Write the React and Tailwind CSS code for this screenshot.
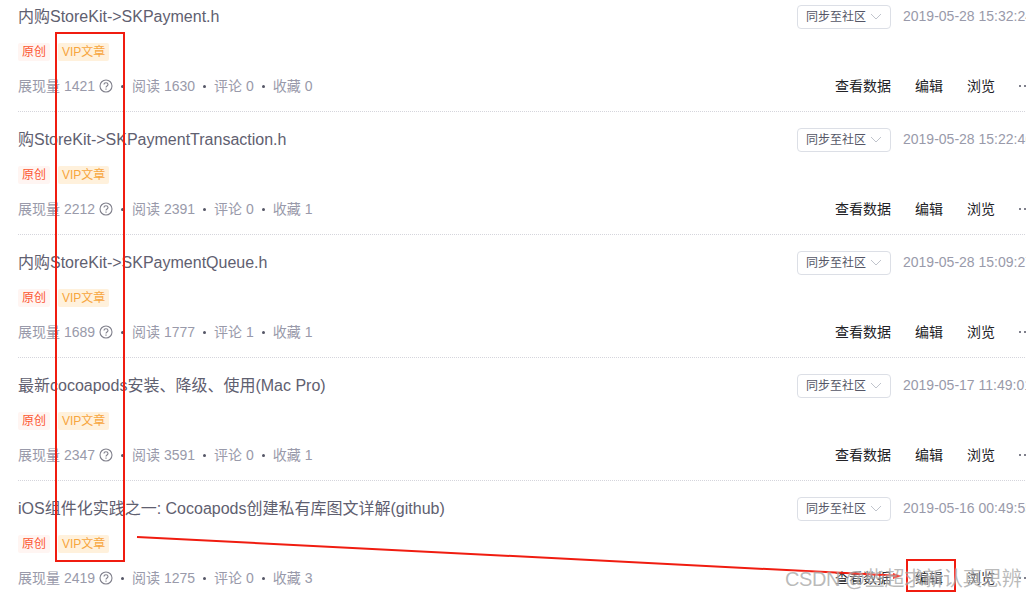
import React from 'react';

const rows = [
  { title: '内购StoreKit->SKPayment.h', views: 1421, reads: 1630, comments: 0, saves: 0, date: '2019-05-28 15:32:24' },
  { title: '购StoreKit->SKPaymentTransaction.h', views: 2212, reads: 2391, comments: 0, saves: 1, date: '2019-05-28 15:22:46' },
  { title: '内购StoreKit->SKPaymentQueue.h', views: 1689, reads: 1777, comments: 1, saves: 1, date: '2019-05-28 15:09:27' },
  { title: '最新cocoapods安装、降级、使用(Mac Pro)', views: 2347, reads: 3591, comments: 0, saves: 1, date: '2019-05-17 11:49:01' },
  { title: 'iOS组件化实践之一: Cocoapods创建私有库图文详解(github)', views: 2419, reads: 1275, comments: 0, saves: 3, date: '2019-05-16 00:49:55' },
];

const Dot = () => <span className="mx-[8px] h-[3px] w-[3px] rounded-full bg-[#555666]"></span>;

const Row = ({ row }) => (
  <div className="h-[123px] border-b border-dotted border-[#d5d5dc] pt-[16px] box-border">
    <div className="flex h-[23px] items-center">
      <div className="flex-1 text-[16px] text-[#5f6070] whitespace-nowrap">{row.title}</div>
      <div className="ml-auto flex w-[248px] shrink-0 items-center whitespace-nowrap">
        <div className="flex h-[24px] w-[94px] items-center rounded-[4px] border border-[#dcdfe6] pl-[8px] text-[12px] text-[#555666]">
          同步至社区
          <svg className="ml-[4px]" width="12" height="7" viewBox="0 0 12 7" fill="none" stroke="#c0c4cc" strokeWidth="1">
            <path d="M1 1l5 5 5-5" />
          </svg>
        </div>
        <span className="ml-[12px] text-[14px] text-[#999aaa]">{row.date}</span>
      </div>
    </div>
    <div className="mt-[15px] flex h-[18px] items-center gap-[8px] text-[12px]">
      <span className="rounded-[2px] bg-[#fff5f2] px-[4px] leading-[18px] text-[#fc5531]">原创</span>
      <span className="rounded-[2px] bg-[#fff1dc] px-[4px] leading-[18px] text-[#f7a63e]">VIP文章</span>
    </div>
    <div className="mt-[15px] flex h-[20px] items-center text-[14px] whitespace-nowrap">
      <div className="flex items-center text-[#999aaa]">
        <span>展现量 {row.views}</span>
        <svg className="ml-[4px]" width="14" height="14" viewBox="0 0 14 14" fill="none" stroke="#80808c" strokeWidth="1.1">
          <circle cx="7" cy="7" r="6" />
          <path d="M5 5.6c0-1.1.9-1.9 2-1.9s2 .8 2 1.8c0 1.4-2 1.5-2 3" />
          <path d="M7 9.6v1.1" />
        </svg>
        <Dot />
        <span>阅读 {row.reads}</span>
        <Dot />
        <span>评论 {row.comments}</span>
        <Dot />
        <span>收藏 {row.saves}</span>
      </div>
      <div className="ml-auto flex w-[210px] shrink-0 items-center text-[#222226]">
        <span>查看数据</span>
        <span className="ml-[24px]">编辑</span>
        <span className="ml-[24px]">浏览</span>
        <span className="ml-[24px] flex gap-[3px]">
          <i className="h-[2px] w-[2px] rounded-full bg-[#555666]"></i>
          <i className="h-[2px] w-[2px] rounded-full bg-[#555666]"></i>
          <i className="h-[2px] w-[2px] rounded-full bg-[#555666]"></i>
        </span>
      </div>
    </div>
  </div>
);

export default function App() {
  return (
    <div className="relative h-[597px] w-[1026px] overflow-hidden bg-white font-['Liberation_Sans','Noto_Sans_CJK_SC',sans-serif]">
      {/* list runs off both edges of the screenshot */}
      <div className="-mt-[11px] w-[1045px] pl-[18px]">
        {rows.map((row) => (
          <Row key={row.title} row={row} />
        ))}
      </div>

      {/* red annotations drawn on top of the capture */}
      <div className="absolute left-[55px] top-[32px] h-[530px] w-[70px] border-2 border-[#f01c10]"></div>
      <div className="absolute left-[906px] top-[559px] h-[33px] w-[50px] border-2 border-[#f01c10]"></div>
      <svg className="absolute left-0 top-0" width="1026" height="597" fill="none">
        <path d="M137 537L894 575.5" stroke="#f01c10" strokeWidth="2" />
        <path d="M902 576l-9-3v6z" fill="#f01c10" />
      </svg>

      {/* watermark */}
      <div className="absolute left-[785px] top-[566px] text-[20px] tracking-[-0.45px] leading-[26px] whitespace-nowrap text-[#8c8c8c]/60 [text-shadow:0_0_2px_rgba(255,255,255,0.8)]">
        CSDN @些超求新认真思辨
      </div>
    </div>
  );
}
